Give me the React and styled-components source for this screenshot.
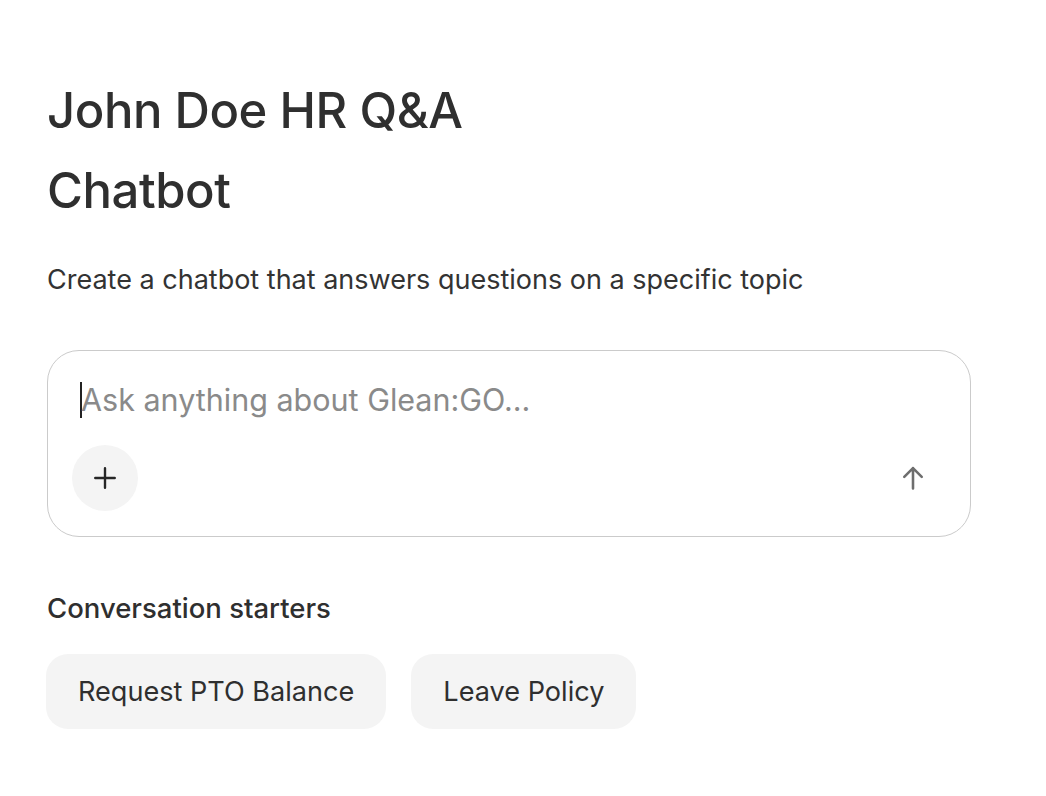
import React from 'react';
import styled, { createGlobalStyle } from 'styled-components';

const GlobalStyle = createGlobalStyle`
  html, body {
    margin: 0;
    padding: 0;
    background: #ffffff;
  }
  body {
    font-family: Inter, "Noto Sans", "Liberation Sans", sans-serif;
    color: #333333;
  }
`;

const Page = styled.main`
  display: flex;
  flex-direction: column;
  padding: 71px 75px 60px 47px;
`;

const Title = styled.h1`
  font-size: 49px;
  font-weight: 500;
  line-height: 80px;
  letter-spacing: -0.45px;
  margin: 0;
  max-width: 480px;
  color: #2f2f2f;
`;

const Subtitle = styled.p`
  font-size: 27px;
  font-weight: 400;
  line-height: 32px;
  margin: 33px 0 0;
  color: #333333;
`;

const Composer = styled.div`
  margin-top: 54px;
  width: 924px;
  box-sizing: border-box;
  border: 1.5px solid #cbcbcb;
  border-radius: 32px;
  padding: 29px 24px 25px 24px;
  display: flex;
  flex-direction: column;
  gap: 25px;
`;

const PromptRow = styled.label`
  display: flex;
  align-items: center;
  height: 40px;
  padding-left: 8px;
`;

const Caret = styled.span`
  width: 1.5px;
  height: 36px;
  margin-right: -0.5px;
  background: #222;
  flex: none;
`;

const Prompt = styled.input`
  flex: 1;
  border: none;
  outline: none;
  font-family: inherit;
  font-size: 30.5px;
  line-height: 40px;
  height: 40px;
  padding: 0;
  color: #333;
  caret-color: transparent;
  background: transparent;

  &::placeholder {
    color: #8a8a8a;
  }
`;

const ComposerBar = styled.div`
  display: flex;
  align-items: center;
  justify-content: space-between;
`;

const RoundButton = styled.button`
  width: ${({ size }) => size}px;
  height: ${({ size }) => size}px;
  border-radius: 50%;
  border: none;
  padding: 0;
  margin-right: ${({ inset }) => inset || 0}px;
  display: flex;
  align-items: center;
  justify-content: center;
  background: ${({ filled }) => (filled ? '#f4f4f4' : 'transparent')};
  color: ${({ filled }) => (filled ? '#262626' : '#6e6e6e')};
  cursor: pointer;
`;

const SectionLabel = styled.h2`
  font-size: 27.5px;
  font-weight: 500;
  line-height: 32px;
  margin: 55px 0 0;
  color: #2f2f2f;
`;

const Starters = styled.div`
  display: flex;
  gap: 25px;
  margin-top: 30px;
  margin-left: -1px;
`;

const Starter = styled.button`
  font-family: inherit;
  font-size: 27.1px;
  color: #2f2f2f;
  background: #f4f4f4;
  border: none;
  border-radius: 22px;
  height: 75px;
  padding: 0 32px;
  cursor: pointer;
`;

const PlusIcon = () => (
  <svg width="26" height="26" viewBox="0 0 24 24" fill="none" stroke="currentColor" strokeWidth="2.2" strokeLinecap="round">
    <path d="M12 3v18M3 12h18" />
  </svg>
);

const ArrowUpIcon = () => (
  <svg width="28" height="28" viewBox="0 0 24 24" fill="none" stroke="currentColor" strokeWidth="2.2" strokeLinecap="round" strokeLinejoin="round">
    <path d="M12 21V3.5M4.5 11 12 3.5 19.5 11" />
  </svg>
);

const starters = ['Request PTO Balance', 'Leave Policy'];

export default function App() {
  return (
    <>
      <GlobalStyle />
      <Page>
        <Title>John Doe HR Q&amp;A Chatbot</Title>
        <Subtitle>Create a chatbot that answers questions on a specific topic</Subtitle>
        <Composer>
          <PromptRow>
            <Caret />
            <Prompt placeholder="Ask anything about Glean:GO..." />
          </PromptRow>
          <ComposerBar>
            <RoundButton size={66} filled aria-label="Add">
              <PlusIcon />
            </RoundButton>
            <RoundButton size={48} inset={9} aria-label="Send">
              <ArrowUpIcon />
            </RoundButton>
          </ComposerBar>
        </Composer>
        <SectionLabel>Conversation starters</SectionLabel>
        <Starters>
          {starters.map((s) => (
            <Starter key={s}>{s}</Starter>
          ))}
        </Starters>
      </Page>
    </>
  );
}
